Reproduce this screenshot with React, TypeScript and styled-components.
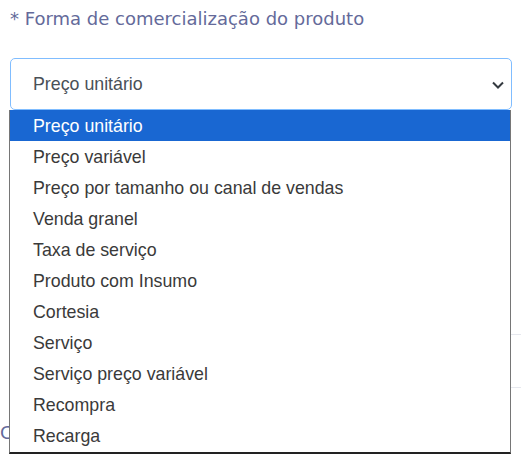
import React from 'react';
import styled, { createGlobalStyle } from 'styled-components';

const options = [
    'Preço unitário',
    'Preço variável',
    'Preço por tamanho ou canal de vendas',
    'Venda granel',
    'Taxa de serviço',
    'Produto com Insumo',
    'Cortesia',
    'Serviço',
    'Serviço preço variável',
    'Recompra',
    'Recarga',
];

const GlobalStyle = createGlobalStyle`
    html, body {
        margin: 0;
        padding: 0;
        background: #fff;
    }
`;

export default function App() {
    const selected = 0;
    return (
        <Page>
            <GlobalStyle />
            <Field>
                <Label>* Forma de comercialização do produto</Label>
                <SelectBox>
                    <span>{options[selected]}</span>
                    <svg width="14" height="10" viewBox="0 0 14 10">
                        <path d="M2 2.5 L7 7.5 L12 2.5" fill="none" stroke="#343a40" strokeWidth="2" />
                    </svg>
                </SelectBox>
                <ListBox>
                    {options.map((o, i) => (
                        <Option key={o} active={i === selected}>
                            {o}
                        </Option>
                    ))}
                </ListBox>
            </Field>

            <Divider />
            <Spacer />
            <Divider />
            <NextLabel>Categoria</NextLabel>
        </Page>
    );
}

const Page = styled.div`
    width: 521px;
    height: 467px;
    overflow: hidden;
    box-sizing: border-box;
    padding: 0 0 0 10px;
    font-family: 'Liberation Sans', Arial, sans-serif;
`;

const Field = styled.div`
    position: relative;
    display: flex;
    flex-direction: column;
    padding-top: 8px;
`;

const Label = styled.label`
    font-family: 'DejaVu Sans', 'Noto Sans', sans-serif;
    font-size: 18px;
    color: #646a9a;
    line-height: 22px;
    margin-bottom: 28px;
`;

const SelectBox = styled.div`
    height: 52px;
    box-sizing: border-box;
    width: 502px;
    border: 1px solid #80bdff;
    border-radius: 5px;
    display: flex;
    align-items: center;
    justify-content: space-between;
    padding: 0 6px 0 22px;
    font-size: 17.8px;
    color: #495057;

    svg {
        margin-top: 2px;
    }
`;

const ListBox = styled.ul`
    position: absolute;
    top: 110px;
    left: -1px;
    width: 502px;
    box-sizing: border-box;
    margin: 0;
    padding: 0 0 1px 0;
    list-style: none;
    background: #fff;
    border: 1px solid #767676;
    border-top: none;
    border-bottom: 2px solid #222;
    z-index: 2;
`;

const Option = styled.li<{ active?: boolean }>`
    height: 31px;
    line-height: 32px;
    overflow: hidden;
    padding-left: 23px;
    font-size: 17.8px;
    color: ${(p) => (p.active ? '#fff' : '#3a3a3a')};
    background: ${(p) => (p.active ? '#1967d2' : 'transparent')};
`;

const Divider = styled.div`
    height: 1px;
    background: #e6e8ee;
    margin-top: 224px;
`;

const Spacer = styled.div`
    height: 0;
    margin-top: -172px;
`;

const NextLabel = styled.div`
    font-family: 'DejaVu Sans', 'Noto Sans', sans-serif;
    font-size: 18px;
    color: #646a9a;
    margin-top: 34px;
    margin-left: -10px;
    padding-left: 0;
`;
